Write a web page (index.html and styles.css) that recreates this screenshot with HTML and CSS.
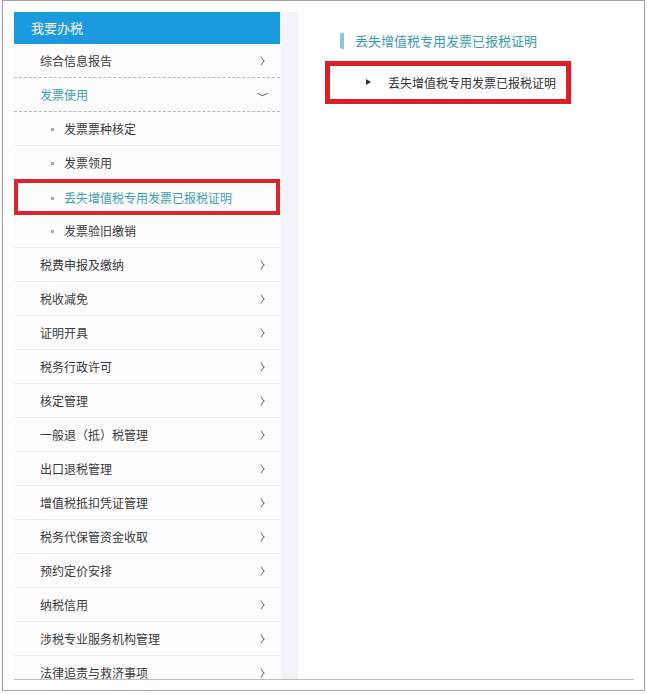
FILE: index.html
```html
<!DOCTYPE html>
<html lang="zh-CN">
<head>
    <meta charset="UTF-8">
    <meta name="viewport" content="width=device-width, initial-scale=1.0">
    <title>我要办税</title>
    <link rel="stylesheet" href="styles.css">
</head>
<body>
    <div class="frame">
        <div class="panel">
            <div class="sidebar">
                <div class="side-head">我要办税</div>
                <ul class="menu">
                    <li class="item dotted"><span>综合信息报告</span><i class="arrow"></i></li>
                    <li class="item dotted open"><span>发票使用</span><i class="arrow down"></i></li>
                    <li class="sub"><span>发票票种核定</span></li>
                    <li class="sub"><span>发票领用</span></li>
                    <li class="sub active"><span>丢失增值税专用发票已报税证明</span></li>
                    <li class="sub"><span>发票验旧缴销</span></li>
                    <li class="item"><span>税费申报及缴纳</span><i class="arrow"></i></li>
                    <li class="item"><span>税收减免</span><i class="arrow"></i></li>
                    <li class="item"><span>证明开具</span><i class="arrow"></i></li>
                    <li class="item"><span>税务行政许可</span><i class="arrow"></i></li>
                    <li class="item"><span>核定管理</span><i class="arrow"></i></li>
                    <li class="item"><span>一般退（抵）税管理</span><i class="arrow"></i></li>
                    <li class="item"><span>出口退税管理</span><i class="arrow"></i></li>
                    <li class="item"><span>增值税抵扣凭证管理</span><i class="arrow"></i></li>
                    <li class="item"><span>税务代保管资金收取</span><i class="arrow"></i></li>
                    <li class="item"><span>预约定价安排</span><i class="arrow"></i></li>
                    <li class="item"><span>纳税信用</span><i class="arrow"></i></li>
                    <li class="item"><span>涉税专业服务机构管理</span><i class="arrow"></i></li>
                    <li class="item"><span>法律追责与救济事项</span><i class="arrow"></i></li>
                </ul>
            </div>
            <div class="strip"></div>
            <div class="content">
                <h2 class="title">丢失增值税专用发票已报税证明</h2>
                <div class="links">
                    <a class="link">丢失增值税专用发票已报税证明</a>
                </div>
            </div>
        </div>
    </div>
</body>
</html>
```

FILE: styles.css
```css
* {
    box-sizing: border-box;
}
body {
    margin: 0;
    background-color: white;
    font-family: "Noto Sans CJK SC", "Liberation Sans", sans-serif;
    color: #3a3a3a;
}
.frame {
    margin: 0 2px;
    height: 691px;
    border: 1px solid #a3a3a3;
    padding: 11px 9px 0 11px;
    box-shadow: 0 1px 2px rgba(0,0,0,0.15);
}
.panel {
    display: flex;
    width: 620px;
    height: 668px;
    overflow: hidden;
    border-bottom: 1px solid #bdbdbd;
}
.sidebar {
    width: 266px;
    flex-shrink: 0;
    background-color: #fdfdfd;
}
.side-head {
    height: 32px;
    line-height: 32px;
    padding-left: 17px;
    background-color: #1b9ae0;
    color: white;
    font-size: 13px;
}
.menu {
    list-style: none;
    margin: 0;
    padding: 0;
}
.menu li {
    height: 34px;
    display: flex;
    align-items: center;
    font-size: 12px;
    border-bottom: 1px solid #ececec;
    position: relative;
}
.item {
    padding-left: 26px;
    justify-content: space-between;
    padding-right: 14px;
}
.item.dotted {
    border-bottom: 1px dashed #b8b8b8;
}
.item.open span {
    color: #3aa0b8;
}
.arrow {
    width: 5px;
    height: 9px;
    position: relative;
}
.arrow::before,
.arrow::after {
    content: "";
    position: absolute;
    width: 1px;
    height: 6px;
    background-color: #777;
}
.arrow::before {
    top: 0;
    left: 1px;
    transform: rotate(-35deg);
}
.arrow::after {
    top: 4px;
    left: 1px;
    transform: rotate(35deg);
}
.arrow.down {
    width: 11px;
    height: 5px;
    margin-right: -2px;
}
.arrow.down::before,
.arrow.down::after {
    width: 6px;
    height: 1px;
    top: 2px;
}
.arrow.down::before {
    left: 0;
    transform: rotate(25deg);
}
.arrow.down::after {
    left: 5px;
    transform: rotate(-25deg);
}
.sub {
    padding-left: 50px;
}
.sub::before {
    content: "";
    position: absolute;
    left: 37px;
    top: 16px;
    width: 3px;
    height: 3px;
    background-color: #aaa;
}
.sub.active {
    color: #3aa0b8;
    border: 4px solid #e0222b;
    padding-left: 46px;
    height: 36px;
    margin-top: -1px;
    margin-bottom: -1px;
    z-index: 1;
}
.sub.active::before {
    left: 33px;
    top: 14px;
}
.strip {
    width: 18px;
    flex-shrink: 0;
    background-color: #f3f4f7;
    border-left: 1px solid #f9f9fb;
    border-right: 1px solid #eceef1;
}
.content {
    flex: 1;
    background-color: white;
}
.title {
    margin: 21px 0 0 42px;
    padding-left: 11px;
    height: 16px;
    line-height: 16px;
    font-size: 13px;
    font-weight: normal;
    color: #3a9ab2;
    border-left: 4px solid #8cc3e2;
    border-radius: 2px;
}
.links {
    margin: 12px 0 0 27px;
    width: 246px;
    height: 43px;
    border: 5px solid #de1f2a;
    display: flex;
    align-items: center;
    padding-left: 36px;
}
.link {
    font-size: 12px;
    color: #333;
    position: relative;
    padding-left: 22px;
}
.link::before {
    content: "";
    position: absolute;
    left: 0;
    top: 5px;
    border-left: 5px solid #333;
    border-top: 3px solid transparent;
    border-bottom: 3px solid transparent;
}
```
